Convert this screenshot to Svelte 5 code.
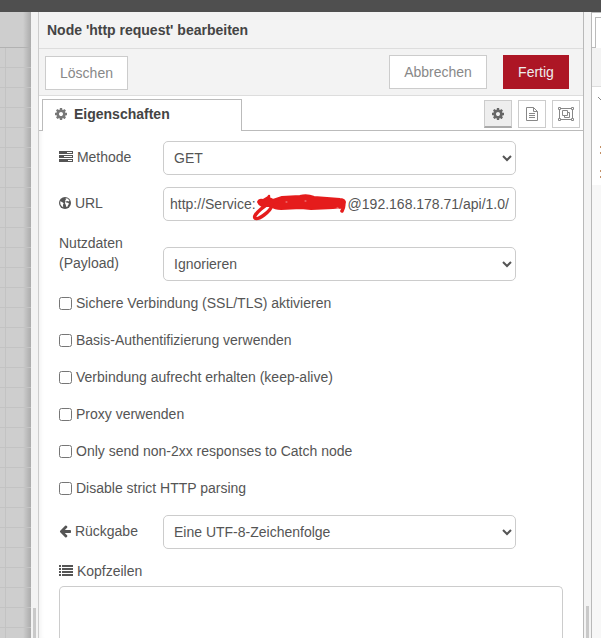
<script lang="ts">
  const gear =
    'M1152 896q0-106-75-181t-181-75-181 75-75 181 75 181 181 75 181-75 75-181zm512-109v222q0 12-8 23t-20 13l-185 28q-19 54-39 91 35 50 107 138 10 12 10 25t-9 23q-27 37-99 108t-94 71q-12 0-26-9l-138-108q-44 23-91 38-16 136-29 186-7 28-36 28h-222q-14 0-24.500-8.500t-11.500-21.500l-28-184q-49-16-90-37l-141 107q-10 9-25 9-14 0-25-11-126-114-165-168-7-10-7-23 0-12 8-23 15-21 51-66.500t54-70.500q-27-50-41-99l-183-27q-13-2-21-12.500t-8-23.500v-222q0-12 8-23t19-13l186-28q14-46 39-92-40-57-107-138-10-12-10-24 0-10 9-23 26-36 98.500-107.500t94.500-71.500q13 0 26 10l138 107q44-23 91-38 16-136 29-186 7-28 36-28h222q14 0 24.500 8.500t11.500 21.500l28 184q49 16 90 37l142-107q9-9 24-9 13 0 25 10 129 119 165 170 7 8 7 22 0 12-8 23-15 21-51 66.500t-54 70.500q26 50 41 98l183 28q13 2 21 12.500t8 23.500z';

  let options = $state([
    { label: 'Sichere Verbindung (SSL/TLS) aktivieren', checked: false },
    { label: 'Basis-Authentifizierung verwenden', checked: false },
    { label: 'Verbindung aufrecht erhalten (keep-alive)', checked: false },
    { label: 'Proxy verwenden', checked: false },
    { label: 'Only send non-2xx responses to Catch node', checked: false },
    { label: 'Disable strict HTTP parsing', checked: false }
  ]);
</script>

{#snippet gearIcon()}
  <svg class="icon" width="14" height="14" viewBox="0 0 1792 1792"><path d={gear} /></svg>
{/snippet}

<div class="editor">
  <div class="topbar"></div>
  <div class="main">
    <div class="workspace">
      <div class="workspace-tabs"></div>
      <div class="grid"></div>
    </div>
    <div class="separator left"><i></i></div>

    <div class="tray">
      <div class="tray-header">Node 'http request' bearbeiten</div>
      <div class="tray-toolbar">
        <button class="delete">Löschen</button>
        <button class="cancel">Abbrechen</button>
        <button class="primary">Fertig</button>
      </div>
      <div class="tabs">
        <div class="tab">{@render gearIcon()}<span>Eigenschaften</span></div>
        <div class="tab-buttons">
          <button class="active" aria-label="Eigenschaften">{@render gearIcon()}</button>
          <button aria-label="Beschreibung">
            <svg width="14" height="16" viewBox="0 0 14 16" fill="none" stroke="#888">
              <path d="M1.500 1.500h7l4 4v9h-11zM8.500 1.500v4h4M4 7.500h6M4 9.500h6M4 11.500h6" />
            </svg>
          </button>
          <button aria-label="Darstellung">
            <svg width="16" height="14" viewBox="0 0 16 14" fill="none" stroke="#888">
              <path d="M2 1.500h12M2 12.500h12M1.500 2v10M14.500 2v10M4.500 3.500h5v5h-5zM9.500 5.500h2v5h-5v-2" />
              <path fill="#fff" d="M.5.5h2v2h-2zM13.500.5h2v2h-2zM.5 11.500h2v2h-2zM13.500 11.500h2v2h-2z" />
            </svg>
          </button>
        </div>
      </div>

      <form class="form">
        <div class="row">
          <label for="method">
            <svg class="icon" width="14" height="14" viewBox="0 0 14 14">
              <path d="M0 1h14v3H0zM0 5h14v3H0zM0 9h14v3H0z" />
              <path stroke="#fff" d="M8 2.500h5M5 6.500h8M9 10.500h4" />
            </svg>
            Methode
          </label>
          <select id="method"><option>GET</option></select>
        </div>

        <div class="row">
          <span class="label">
            <svg class="icon" width="12" height="14" viewBox="0 0 12 14">
              <circle cx="6" cy="7" r="6" />
              <path fill="#fff" d="M6.500 2.200l2 .3 2 2-.9 1-1.300-.5-1.400.6.300 1 1.800.2 1 1-1 1.500-.6 1.500-1 .2-.7-2.200-.8-1.700.6-1.500-.3-1.300.8-.8zM1.200 5.300l1.800.7 1.700 1.200-.7 1.500.2 2.500-1.500-1-1.300-2z" />
            </svg>
            URL
          </span>
          <div class="url">
            <span>http://Service:</span>
            <svg width="104" height="32" viewBox="0 0 104 32">
              <path class="blot" d="M9 10q1-3 5-2l5-3q2-3 1 1l4 2 9-3 18-1q7-2 14 1l26 2q4 0 5 3l-2 5-10 1-22 1-10-1-20 1q-6 0-10-3l-9 0q-3-1-4-4z" />
              <path d="M28 9Q20 10 12 17T6 26Q8 28 15 23T23 13M94 9q2 5-1 10M91 15l3-1" />
              <path class="speck" d="M37 10h1M56 9h1M88 16h1" />
            </svg>
            <span>@192.168.178.71/api/1.0/</span>
          </div>
        </div>

        <div class="row payload">
          <label for="payload">Nutzdaten (Payload)</label>
          <select id="payload"><option>Ignorieren</option></select>
        </div>

        {#each options as option}
          <label class="check"><input type="checkbox" bind:checked={option.checked} />{option.label}</label>
        {/each}

        <div class="row">
          <label for="return">
            <svg class="icon" width="12" height="14" viewBox="64 0 1600 1792" preserveAspectRatio="none">
              <path d="M1664 896v128q0 53-32.500 90.500t-84.500 37.500h-704l293 294q38 36 38 90t-38 90l-75 76q-37 37-90 37-52 0-91-37l-651-652q-37-37-37-90 0-52 37-91l651-650q38-38 91-38 52 0 90 38l75 74q38 38 38 91t-38 91l-293 293h704q52 0 84.500 37.500t32.500 90.500z" />
            </svg>
            Rückgabe
          </label>
          <select id="return"><option>Eine UTF-8-Zeichenfolge</option></select>
        </div>

        <div class="headers-label">
          <svg class="icon" width="14" height="14" viewBox="0 0 14 14">
            <path d="M0 1h2v2H0zM3 1h11v2H3zM0 4h2v2H0zM3 4h11v2H3zM0 7h2v2H0zM3 7h11v2H3zM0 10h2v2H0zM3 10h11v2H3z" />
          </svg>
          Kopfzeilen
        </div>
        <div class="headers"></div>
      </form>
    </div>

    <div class="separator right"><i></i></div>
    <div class="sidebar">
      <div class="side-tabs"><i></i></div>
      <div class="side-toolbar"></div>
      <div class="side-content">
        <svg width="9" height="90" viewBox="0 0 9 90" fill="none">
          <path stroke="#888" d="M6 2l3 3" />
          <path stroke="#c39067" stroke-width="2" d="M8 52h1M8 58h1M8 76h1M8 82h1" />
        </svg>
      </div>
    </div>
  </div>
</div>

<style>
  :global(body) {
    margin: 0;
    overflow: hidden;
  }

  .editor {
    height: 638px;
    overflow: hidden;
    display: flex;
    flex-direction: column;
    font: 14px/20px "Liberation Sans", Arial, sans-serif;
    color: #555;
  }

  .editor * {
    box-sizing: border-box;
  }

  .topbar {
    height: 12px;
    flex: none;
    background: #4f4f4f;
  }

  .main {
    flex: 1;
    min-height: 0;
    display: flex;
  }

  .workspace {
    width: 31px;
    flex: none;
    display: flex;
    flex-direction: column;
    background: linear-gradient(to right, transparent 23px, rgba(0, 0, 0, 0.17)), #cecece;
  }

  .workspace-tabs {
    height: 36px;
    border-bottom: 1px solid #b2b2b2;
  }

  .grid {
    flex: 1;
    background-image:
      linear-gradient(to right, #c3c3c3 1px, transparent 1px),
      linear-gradient(#c3c3c3 1px, transparent 1px);
    background-size: 20px 20px;
    background-position: 5px 19px;
  }

  .separator {
    flex: none;
    display: flex;
    background: #f3f3f3;
  }

  .separator.left {
    width: 8px;
    border-right: 1px solid #ccc;
    padding: 596px 0 0 2px;
  }

  .separator.right {
    width: 9px;
    border: solid #b9b9b9;
    border-width: 0 1px;
    padding: 594px 0 0 2px;
  }

  .separator i {
    width: 3px;
    background: #c9c9c9;
  }

  .tray {
    width: 544px;
    flex: none;
    display: flex;
    flex-direction: column;
    background: #fff;
  }

  .tray-header {
    height: 37px;
    padding: 8px 8px 0;
    border-bottom: 1px solid #ddd;
    background: #f3f3f3;
    color: #444;
    font-weight: bold;
  }

  .tray-toolbar {
    height: 47px;
    padding: 6px 14px 0 6px;
    display: flex;
    border-bottom: 1px solid #ddd;
    background: #f3f3f3;
  }

  button {
    margin: 0;
    padding: 0;
    border: 1px solid #ccc;
    background: #fff;
    color: #888;
    font: inherit;
  }

  .tray-toolbar button {
    height: 34px;
  }

  .tray-toolbar .delete {
    width: 83px;
    margin: 1px auto 0 0;
  }

  .tray-toolbar .cancel {
    width: 98px;
    margin-right: 16px;
  }

  .tray-toolbar .primary {
    width: 66px;
    border-color: #ad1625;
    background: #ad1625;
    color: #eee;
  }

  .tabs {
    height: 35px;
    flex: none;
    display: flex;
    justify-content: space-between;
    padding: 3px 3px 0;
    box-shadow: inset 0 -1px #bbb;
  }

  .tab {
    width: 200px;
    padding: 4px 11px;
    display: flex;
    gap: 6px;
    border: 1px solid #bbb;
    border-bottom: 0;
    background: #fff;
    color: #444;
    font-weight: bold;
  }

  .tab .icon {
    margin-top: 3px;
    fill: #777;
  }

  .tab-buttons {
    display: flex;
    gap: 6px;
    padding-top: 1px;
  }

  .tab-buttons button {
    width: 28px;
    height: 28px;
    display: flex;
    align-items: center;
    justify-content: center;
  }

  .tab-buttons .active {
    border-bottom: 2px solid #aaa;
    background: #eee;
  }

  .icon {
    flex: none;
    fill: #555;
  }

  .tab-buttons .icon {
    fill: #666;
  }

  .form {
    flex: 1;
    padding: 10px 20px 0;
    display: flex;
    flex-direction: column;
    box-shadow: inset 5px 0 5px -4px #eee;
  }

  .row {
    display: flex;
    margin-bottom: 12px;
  }

  .row label,
  .row .label {
    width: 104px;
    padding-top: 6px;
  }

  .row .icon,
  .headers-label .icon {
    vertical-align: -2px;
  }

  select,
  .url {
    width: 353px;
    height: 34px;
    border: 1px solid #ccc;
    border-radius: 5px;
    background: #fff;
    color: #555;
    font: inherit;
  }

  select {
    margin: 0;
    padding: 0 5px 0 6px;
  }

  .url {
    display: flex;
    align-items: center;
    padding: 0 6px;
    white-space: nowrap;
  }

  .url svg {
    flex: none;
    margin: 4px -5px -4px -7px;
    position: relative;
    fill: none;
    stroke: #e51c1c;
    stroke-width: 3.5;
    stroke-linecap: round;
    stroke-linejoin: round;
  }

  .url .blot {
    fill: #e51c1c;
    stroke-width: 2;
  }

  .url .speck {
    stroke: #e99;
    stroke-width: 1;
  }

  .payload label {
    width: 80px;
    margin-right: 24px;
    padding-top: 0;
  }

  .payload select {
    margin-top: 14px;
  }

  .check {
    display: flex;
    align-items: center;
    height: 20px;
    margin-bottom: 17px;
  }

  .check input {
    width: 13px;
    height: 13px;
    margin: 0 4px 0 0;
  }

  .headers-label {
    height: 20px;
    margin-bottom: 5px;
  }

  .headers {
    width: 504px;
    flex: 1;
    border: 1px solid #ccc;
    border-bottom: 0;
    border-radius: 5px 5px 0 0;
  }

  .sidebar {
    flex: 1;
    display: flex;
    flex-direction: column;
    background: #f7f7f7;
  }

  .side-tabs {
    height: 36px;
    display: flex;
    padding: 4px 0 0 3px;
    border-top: 1px solid #bbb;
    box-shadow: inset 0 -1px #bbb;
    background: #fff;
  }

  .side-tabs i {
    flex: 1;
    border: solid #bbb;
    border-width: 1px 0 0 1px;
    background: #fff;
  }

  .side-toolbar {
    height: 39px;
    border-bottom: 1px solid #ddd;
    background: #f3f3f3;
  }

  .side-content {
    height: 98px;
    padding-top: 8px;
    background: #fff;
  }
</style>
